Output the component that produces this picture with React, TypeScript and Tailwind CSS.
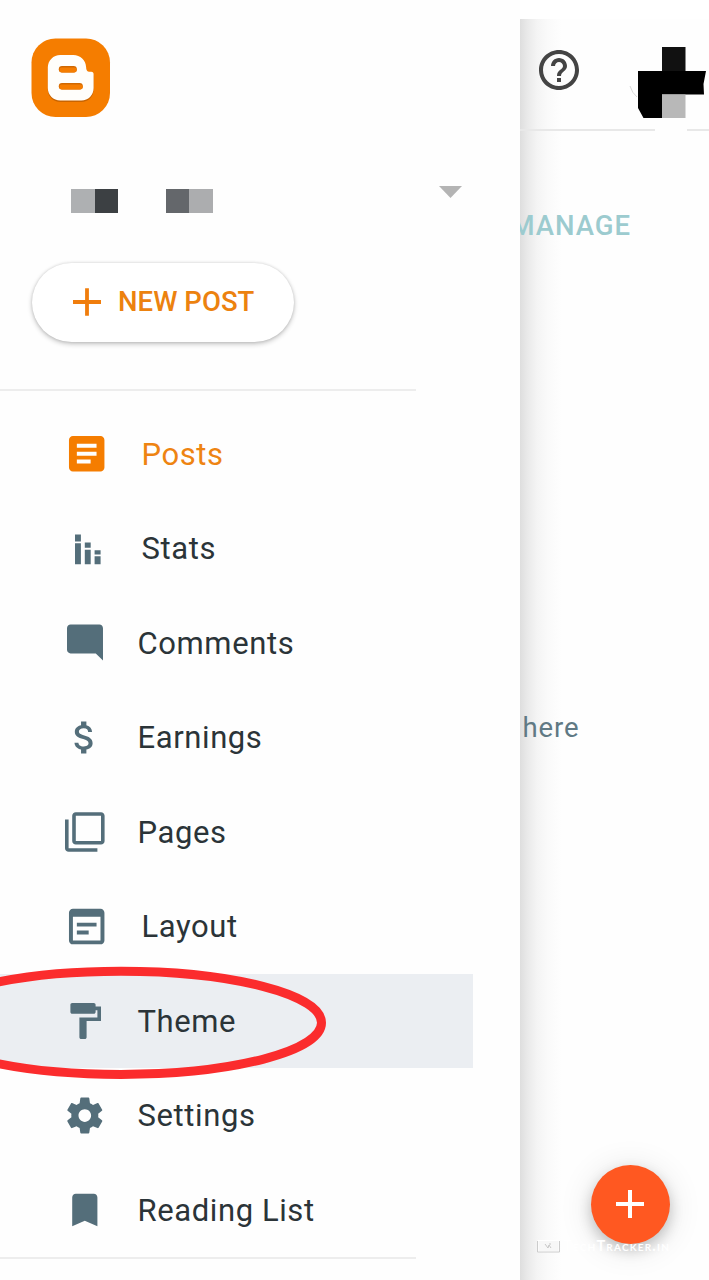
import type { ReactNode } from 'react';

type Item = { label: string; icon: ReactNode; active?: boolean; selected?: boolean; indent?: boolean };

const at = (x: number, y: number, s: number, d: string) => (
  <path transform={`translate(${x - 12 * s} ${y - 12 * s}) scale(${s})`} d={d} />
);

const items: Item[] = [
  {
    label: 'Posts',
    active: true,
    indent: true,
    icon: at(25.7, 23.7, 1.97, 'M19 3H5c-1.1 0-2 .9-2 2v14c0 1.1.9 2 2 2h14c1.1 0 2-.9 2-2V5c0-1.1-.9-2-2-2zm-5 14H7v-2h7v2zm3-4H7v-2h10v2zm0-4H7V7h10v2z'),
  },
  {
    label: 'Stats',
    indent: true,
    icon: <path d="M14 9.6h5.9v6.8H14zM14 18.2h5.9v21H14zM23.8 17.4h5.9v5.4h-5.9zM23.8 24.8h5.9v14.4h-5.9zM33.6 25.2h6v4.3h-6zM33.6 31.2h6v8h-6z" />,
  },
  {
    label: 'Comments',
    icon: at(24, 23.6, 1.8, 'M21.99 4c0-1.1-.89-2-1.99-2H4c-1.1 0-2 .9-2 2v12c0 1.1.9 2 2 2h14l4 4-.01-18z'),
  },
  {
    label: 'Earnings',
    icon: at(23.6, 23.4, 1.78, 'M11.8 10.9c-2.27-.59-3-1.2-3-2.15 0-1.09 1.01-1.85 2.7-1.85 1.78 0 2.44.85 2.5 2.1h2.21c-.07-1.72-1.12-3.3-3.21-3.81V3h-3v2.16c-1.94.42-3.5 1.68-3.5 3.61 0 2.31 1.91 3.46 4.7 4.13 2.5.6 3 1.48 3 2.41 0 .69-.49 1.79-2.7 1.79-2.06 0-2.87-.92-2.98-2.1h-2.2c.12 2.19 1.76 3.42 3.68 3.83V21h3v-2.15c1.95-.37 3.5-1.5 3.5-3.55 0-2.84-2.43-3.81-4.7-4.4z'),
  },
  {
    label: 'Pages',
    icon: at(23.8, 24, 1.8, 'M3 5H1v16c0 1.1.9 2 2 2h16v-2H3V5zm18-4H7c-1.1 0-2 .9-2 2v14c0 1.1.9 2 2 2h14c1.1 0 2-.9 2-2V3c0-1.1-.9-2-2-2zm0 16H7V3h14v14z'),
  },
  {
    label: 'Layout',
    indent: true,
    icon: at(25.7, 23.6, 1.97, 'M19 3H5c-1.11 0-2 .9-2 2v14c0 1.1.89 2 2 2h14c1.1 0 2-.9 2-2V5c0-1.1-.89-2-2-2zm0 16H5V7h14v12zm-2-7H7v-2h10v2zm-4 4H7v-2h6v2z'),
  },
  {
    label: 'Theme',
    selected: true,
    icon: at(23.8, 24, 1.8, 'M18 4V3c0-.55-.45-1-1-1H5c-.55 0-1 .45-1 1v4c0 .55.45 1 1 1h12c.55 0 1-.45 1-1V6h1v4H9v11c0 .55.45 1 1 1h2c.55 0 1-.45 1-1v-9h8V4h-3z'),
  },
  {
    label: 'Settings',
    icon: at(23.8, 23.6, 1.8, 'M19.43 12.98c.04-.32.07-.64.07-.98s-.03-.66-.07-.98l2.11-1.65c.19-.15.24-.42.12-.64l-2-3.46c-.12-.22-.39-.3-.61-.22l-2.49 1c-.52-.4-1.08-.73-1.69-.98l-.38-2.65C14.46 2.18 14.25 2 14 2h-4c-.25 0-.46.18-.49.42l-.38 2.65c-.61.25-1.17.59-1.69.98l-2.49-1c-.23-.09-.49 0-.61.22l-2 3.46c-.13.22-.07.49.12.64l2.11 1.65c-.04.32-.07.65-.07.98s.03.66.07.98l-2.11 1.65c-.19.15-.24.42-.12.64l2 3.46c.12.22.39.3.61.22l2.49-1c.52.4 1.08.73 1.69.98l.38 2.65c.03.24.24.42.49.42h4c.25 0 .46-.18.49-.42l.38-2.65c.61-.25 1.17-.59 1.69-.98l2.49 1c.23.09.49 0 .61-.22l2-3.46c.12-.22.07-.49-.12-.64l-2.11-1.65zM12 15.5c-1.93 0-3.5-1.57-3.5-3.5s1.57-3.5 3.5-3.5 3.5 1.57 3.5 3.5-1.57 3.5-3.5 3.5z'),
  },
  {
    label: 'Reading List',
    icon: at(23.8, 24, 1.8, 'M17 3H7c-1.1 0-1.99.9-1.99 2L5 21l7-3 7 3V5c0-1.1-.9-2-2-2z'),
  },
];

function NavRow({ item }: { item: Item }) {
  return (
    <li className={`flex h-[94.5px] w-[472.5px] items-center pl-[61px] ${item.selected ? 'bg-[#ebeef2]' : ''}`}>
      <svg
        width="48"
        height="48"
        viewBox="0 0 48 48"
        className={`shrink-0 ${item.active ? 'fill-[#f57d00]' : 'fill-[#546e7a]'}`}
      >
        {item.icon}
      </svg>
      <span
        className={`pt-[1.5px] text-[31px] leading-[36px] tracking-[0.6px] whitespace-nowrap ${item.indent ? 'pl-[32.5px]' : 'pl-[28.5px]'} ${item.active ? 'text-[#ee8412]' : 'text-[#2b3438]'}`}
      >
        {item.label}
      </span>
    </li>
  );
}

function BloggerLogo() {
  return (
    <svg width="80" height="80" viewBox="0 0 80 80" className="block">
      <rect x="0.5" y="0.5" width="78.5" height="78.5" rx="24" fill="#f57d00" />
      <g transform="translate(0.3 0)">
        <path
          transform="translate(0 1.6)"
          fill="#c96400"
          d="M29 17H42C49 17 54.5 22 54.8 29C55 32.5 56 33.8 58.5 33.8H60Q62.3 33.8 62.3 36.5V50C62.3 57 57 62.5 50 62.5H29C22 62.5 16.5 57 16.5 50V29.5C16.5 22.5 22 17 29 17Z"
        />
        <path
          fill="#fffefb"
          d="M29 17H42C49 17 54.5 22 54.8 29C55 32.5 56 33.8 58.5 33.8H60Q62.3 33.8 62.3 36.5V50C62.3 57 57 62.5 50 62.5H29C22 62.5 16.5 57 16.5 50V29.5C16.5 22.5 22 17 29 17Z"
        />
        <rect x="27.5" y="28" width="18" height="6.5" rx="3.2" fill="#d06800" />
        <rect x="28" y="29.6" width="17.5" height="4.9" rx="2.4" fill="#f57d00" />
        <rect x="27.5" y="45" width="24" height="6.5" rx="3.2" fill="#d06800" />
        <rect x="28" y="46.6" width="23.5" height="4.9" rx="2.4" fill="#f57d00" />
      </g>
    </svg>
  );
}

function Drawer() {
  return (
    <aside className="h-[1280px] w-[520px] shrink-0 bg-[#fefefe]">
      <div className="pt-[38px] pl-[31px]">
        <BloggerLogo />
      </div>
      <div className="mt-[71px] flex h-[24px] items-start pl-[71px]">
        <span className="h-[24px] w-[23.5px] bg-[#aeb0b2]" />
        <span className="h-[24px] w-[23.5px] bg-[#3c4043]" />
        <span className="ml-[47.5px] h-[24px] w-[23.5px] bg-[#64676b]" />
        <span className="h-[24px] w-[23.5px] bg-[#acadaf]" />
        <svg width="24" height="12" viewBox="0 0 24 12" className="-mt-[3px] ml-[226.5px]">
          <path d="M0 0H23L11.5 12Z" fill="#b4b4b4" />
        </svg>
      </div>
      <button className="mt-[50px] ml-[32px] flex h-[79px] w-[262px] items-center rounded-full bg-white pl-[39.5px] shadow-[0_2px_5px_rgba(0,0,0,0.24),0_0_3px_rgba(0,0,0,0.12)]">
        <svg width="30" height="30" viewBox="0 0 30 30" className="shrink-0">
          <path d="M15 0.3V27.8M1 14H29" stroke="#f07d0c" strokeWidth="3.8" fill="none" />
        </svg>
        <span className="pb-[1.5px] pl-[16.5px] text-[27.5px] leading-[32px] font-medium tracking-[0.05px] whitespace-nowrap text-[#ec820f]">
          NEW POST
        </span>
      </button>
      <hr className="mt-[47px] h-[2px] w-[416px] border-0 bg-[#ededed]" />
      <ul className="mt-[15.75px]">
        {items.map((item) => (
          <NavRow key={item.label} item={item} />
        ))}
      </ul>
      <hr className="h-[2px] w-[416px] border-0 bg-[#ededed]" />
    </aside>
  );
}

function HelpIcon() {
  return (
    <svg width="48" height="48" viewBox="0 0 24 24" className="fill-[#444444]">
      <path d="M11 18h2v-2h-2v2zm1-16C6.48 2 2 6.48 2 12s4.48 10 10 10 10-4.48 10-10S17.52 2 12 2zm0 18c-4.41 0-8-3.59-8-8s3.59-8 8-8 8 3.59 8 8-3.59 8-8 8zm0-14c-2.21 0-4 1.79-4 4h2c0-1.1.9-2 2-2s2 .9 2 2c0 2-3 1.75-3 5h2c0-2.25 3-2.5 3-5 0-2.21-1.79-4-4-4z" />
    </svg>
  );
}

function Background() {
  return (
    <main className="mt-[19px] flex h-[1261px] w-[189px] shrink-0 flex-col overflow-hidden bg-[linear-gradient(to_right,#dedede_0px,#e9e9e9_7px,#f4f4f4_17px,#fafafa_28px,#fefefe_42px)]">
      <header className="flex h-[110px] items-start pt-[27px] pl-[15.3px]">
        <HelpIcon />
        <svg width="80" height="76" viewBox="0 0 80 76" className="mt-[-1px] ml-[43.7px]">
          <path d="M3 41Q5 48 10 52" stroke="#d8d8d8" strokeWidth="1" fill="none" />
          <path d="M35 2H58.5V26H35Z" fill="#111" />
          <path d="M11 26H79L76.5 39L77 49.5H35V73H16.5L11 63Z" fill="#000" />
          <path d="M35 49.5H58.5V73H35Z" fill="#b8b8b8" />
        </svg>
      </header>
      <div className="flex h-[2px]">
        <span className="w-[135px] bg-[#e8e8e8]" />
        <span className="ml-[32px] w-[22px] bg-[#e8e8e8]" />
      </div>
      <div className="mt-[79px] flex w-[111px] justify-end text-[27.5px] leading-[32px] font-medium tracking-[1px] text-[#9ccbcf]">
        MANAGE
      </div>
      <p className="mt-[469.5px] pl-[2.5px] text-[27.5px] leading-[32px] tracking-[0.9px] text-[#607984]">here</p>
      <button className="mt-[421px] ml-[70.5px] flex size-[79px] shrink-0 items-center justify-center rounded-full bg-[#ff5821] shadow-[0_6px_14px_rgba(0,0,0,0.2),0_4px_34px_rgba(0,0,0,0.12)]">
        <svg width="28" height="28" viewBox="0 0 28 28">
          <path d="M14 0V28M0 14H28" stroke="#fff" strokeWidth="4" />
        </svg>
      </button>
    </main>
  );
}

function Watermark() {
  return (
    <div className="absolute top-[1237px] left-[537px] flex h-[18px] w-[160px] items-center">
      <svg width="23" height="14" viewBox="0 0 23 14">
        <rect x="1" y="1.5" width="21" height="11" fill="#f7f7f7" stroke="#fff" />
        <path d="M.5 2V13H22.5V2" stroke="#ccc" strokeWidth="1" fill="none" />
        <path d="M8 5l3 4 1-3 2 3M12 5h2" stroke="#bbb" strokeWidth=".8" fill="none" />
      </svg>
      <span className="pl-[3px] font-['Lato',sans-serif] text-[14.5px] leading-[18px] font-bold tracking-[1.2px] whitespace-nowrap text-white [font-variant-caps:small-caps]">
        TechTracker.in
      </span>
    </div>
  );
}

export default function App() {
  return (
    <div className="relative flex h-[1280px] w-[709px] overflow-hidden bg-white font-['Roboto',sans-serif]">
      <Drawer />
      <Background />
      <svg width="340" height="130" viewBox="0 960 340 130" className="pointer-events-none absolute top-[960px] left-0">
        <ellipse cx="121" cy="1022.8" rx="200.5" ry="51.6" fill="none" stroke="#fb2c2d" strokeWidth="9" />
      </svg>
      <Watermark />
    </div>
  );
}
